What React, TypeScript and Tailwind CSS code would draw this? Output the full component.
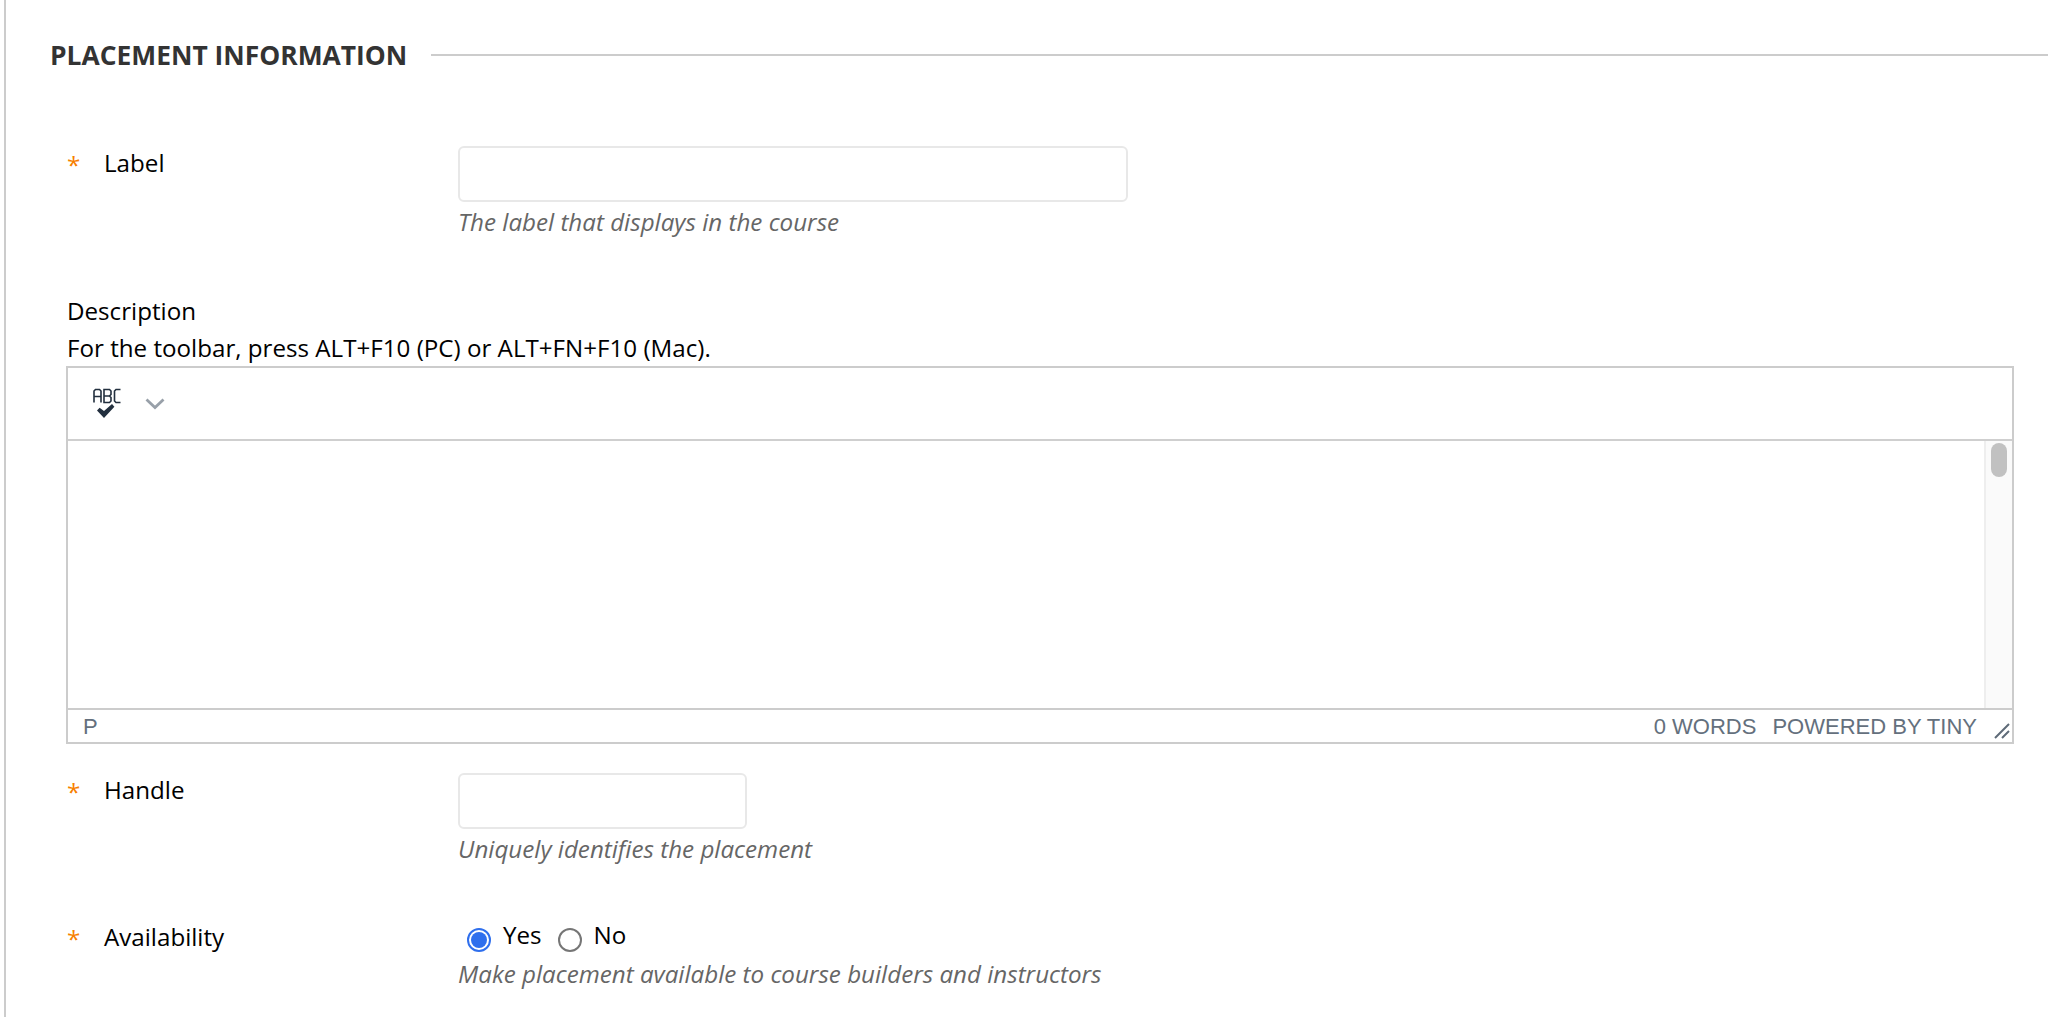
import React from 'react';

const FONT = "font-['Open_Sans',sans-serif]";

// orange required marker + field label
const FieldLabel = ({ text }: { text: string }) => (
  <div className="flex w-[458px] shrink-0 pl-[67px] pt-[2px] text-[24.16px] leading-[30px] text-black">
    <span className="mt-[2px] w-[37px] text-[#f77f00]">*</span>
    <span>{text}</span>
  </div>
);

const Hint = ({ text }: { text: string }) => (
  <p className="text-[24.16px] leading-[30px] italic text-[#666666]">{text}</p>
);

const SpellcheckIcon = () => (
  <svg width="28" height="31" viewBox="0 0 28 31" fill="none" className="text-[#222f3e]">
    <g stroke="currentColor" strokeWidth="1.600">
      <path d="M1 14.500V3l1.500-1.500h4L8 3v11.500M1 8.500h7" />
      <path d="M11 1.500v13h5.500L18 13V9.500L16.500 8 18 6.500V3l-1.500-1.500zM11 8h5.500" />
      <path d="M27.500 1.500H23L21.500 3v10l1.500 1.500h4.500" />
    </g>
    <path d="M4 22.500l2.600-2.800 4.400 3.400 8-7 2.400 2.600L11 30z" fill="currentColor" />
  </svg>
);

const Chevron = () => (
  <svg width="20" height="12" viewBox="0 0 20 12" fill="none" className="text-[#98a0a9]">
    <path d="M1.500 1.500l8.500 8 8.500-8" stroke="currentColor" strokeWidth="2.800" />
  </svg>
);

const Grip = () => (
  <svg width="16" height="16" viewBox="0 0 16 16" fill="none" className="text-[#5f6b78]">
    <path d="M1 15L15 1M8 15l7-7" stroke="currentColor" strokeWidth="2" />
  </svg>
);

const Editor = () => (
  <div className="ml-[66px] mr-[34px] flex h-[378px] flex-col border-2 border-[#cccccc] bg-white">
    <div className="flex h-[73px] shrink-0 items-center gap-[24px] border-b-2 border-[#cfcfcf] pl-[25px]">
      <SpellcheckIcon />
      <Chevron />
    </div>
    <div className="flex min-h-0 flex-1 justify-end">
      <div className="flex w-[28px] justify-center border-l-2 border-[#eeeeee] bg-[#fafafa] pt-[2px]">
        <div className="h-[34px] w-[16px] rounded-full bg-[#c1c1c1]" />
      </div>
    </div>
    <div className="flex h-[34px] shrink-0 items-center justify-between border-t-2 border-[#cccccc] pl-[15px] pr-[2px] font-['Liberation_Sans',sans-serif] text-[22px] text-[#64707d]">
      <span>P</span>
      <div className="flex items-center">
        <span>0 WORDS</span>
        <span className="ml-[16px]">POWERED BY TINY</span>
        <span className="ml-[17px] mt-[10px]">
          <Grip />
        </span>
      </div>
    </div>
  </div>
);

export default function App() {
  return (
    <div className={`${FONT} ml-[4px] min-h-[1017px] border-l-2 border-[#cccccc] bg-white`}>
      <div className="-ml-[6px] flex items-center pt-[38px] pl-[50px]">
        <h2 className="text-[26.400px] leading-[34px] font-bold text-[#333333]">PLACEMENT INFORMATION</h2>
        <div className="ml-[24px] h-[2px] flex-1 bg-[#cccccc]" />
      </div>

      <div className="-ml-[6px]">
        <div className="mt-[74px] flex">
          <FieldLabel text="Label" />
          <div>
            <div className="h-[56px] w-[670px] rounded-[6px] border-2 border-[#e8e8e8] bg-white" />
            <div className="mt-[5px]">
              <Hint text="The label that displays in the course" />
            </div>
          </div>
        </div>

        <div className="mt-[55px] pl-[67px] text-[24.16px] leading-[37px] text-black">
          <p>Description</p>
          <p>For the toolbar, press ALT+F10 (PC) or ALT+FN+F10 (Mac).</p>
        </div>
        <Editor />

        <div className="mt-[29px] flex">
          <FieldLabel text="Handle" />
          <div>
            <div className="h-[56px] w-[289px] rounded-[6px] border-2 border-[#e8e8e8] bg-white" />
            <div className="mt-[5px]">
              <Hint text="Uniquely identifies the placement" />
            </div>
          </div>
        </div>

        <div className="mt-[56px] flex">
          <FieldLabel text="Availability" />
          <div>
            <div className="flex h-[30px] items-center pl-[9px] text-[24.16px] text-black">
              <span className="mt-[10px] flex h-[24px] w-[24px] items-center justify-center rounded-full border-2 border-[#2f6fed]">
                <span className="h-[16px] w-[16px] rounded-full bg-[#2f6fed]" />
              </span>
              <span className="ml-[12px]">Yes</span>
              <span className="mt-[10px] ml-[16px] h-[24px] w-[24px] rounded-full border-2 border-[#767676]" />
              <span className="ml-[12px]">No</span>
            </div>
            <div className="mt-[9px]">
              <Hint text="Make placement available to course builders and instructors" />
            </div>
          </div>
        </div>
      </div>
    </div>
  );
}
